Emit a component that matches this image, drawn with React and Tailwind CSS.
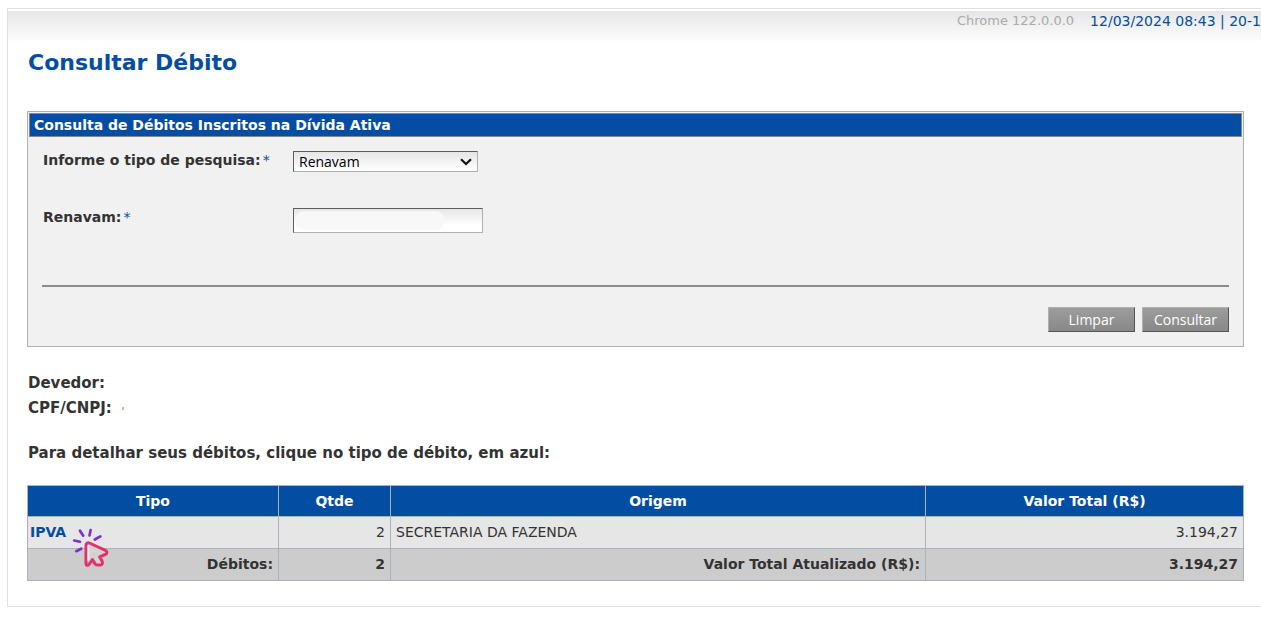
import { useState } from "react";

const debitos = [
    { tipo: "IPVA", qtde: 2, origem: "SECRETARIA DA FAZENDA", valor: "3.194,27" },
];

function ClickIcon() {
    return (
        <svg className="absolute left-11 top-2.5 z-10 w-[38px] h-[42px]" viewBox="0 0 38 42" fill="none" strokeLinecap="round" strokeLinejoin="round" aria-hidden="true">
            <path stroke="#7a33cc" strokeWidth="2.7" d="M2.2 13.5L8 14.8M8 3.7L11.2 8.7M18.6 3.1L17.5 8.5M28.4 9.3L22.8 12.5M4.3 24.2L9.2 21.7" />
            <path fill="#d5d2d4" stroke="#e3306f" strokeWidth="3" d="M14 18.2C14 16.3 15.8 15.3 17.4 16L33.4 23.4C35.6 24.5 35.3 27 33.2 27.5L27.6 29.8L30 34C31.2 36.2 30.3 37.7 28.4 37.9L25.2 38.1C24.1 38.1 23.4 37.6 22.9 36.6L20.4 32.6L17 37.5C15.8 39 14 38.4 14 36.5Z" />
            <path stroke="#f5f0f2" strokeWidth="1.8" d="M16.4 19V33" />
        </svg>
    );
}

export default function App() {
    const [tipo, setTipo] = useState("Renavam");
    const [renavam, setRenavam] = useState("");

    const limpar = () => {
        setTipo("Renavam");
        setRenavam("");
    };

    const button = "w-[87px] h-[25px] border border-t-[#b0b0b0] border-l-[#b0b0b0] border-r-[#555555] border-b-[#555555] bg-gradient-to-b from-[#9d9d9d] to-[#888888] font-['Open_Sans',sans-serif] text-sm leading-5 text-white";
    const field = "border border-t-[#5c5c5c] border-l-[#5c5c5c] border-r-[#b0b0b0] border-b-[#b0b0b0] font-['Open_Sans',sans-serif] text-sm text-black";

    return (
        <div className="bg-white pt-2 pl-[7px] font-['DejaVu_Sans',Verdana,sans-serif] text-sm text-[#333333]">
            <main className="border border-r-0 border-[#e0e0e0] pb-[25px]">
                <header className="mt-0.5 h-8 flex justify-end gap-4 overflow-hidden whitespace-nowrap bg-gradient-to-b from-[#e6e6e6] to-white">
                    <span className="text-[13px] leading-5 text-[#aaaaaa]">Chrome 122.0.0.0</span>
                    <span className="text-sm leading-5 text-[#034ea2]">12/03/2024 08:43 | 20-1</span>
                </header>
                <div className="pl-[19px] pr-[17px]">
                    <h1 className="pt-1 pl-px text-[22px] leading-8 font-bold text-[#034ea2]">Consultar Débito</h1>

                    <form className="mt-8 border border-[#b0b0b0] bg-[#f1f1f1]" onSubmit={(e) => e.preventDefault()}>
                        <h2 className="m-px pl-1 border border-[#888888] bg-[#034ea2] text-sm leading-[22px] font-bold text-white">
                            Consulta de Débitos Inscritos na Dívida Ativa
                        </h2>
                        <div className="mx-3.5 pt-[13px] pb-[52px] border-b-2 border-[#8b8d8a]">
                            <div className="flex items-start pl-px">
                                <label htmlFor="tipo" className="w-[250px] text-sm leading-[18px] font-bold whitespace-nowrap">
                                    Informe o tipo de pesquisa:<span className="ml-0.5 font-normal text-[#034ea2]">*</span>
                                </label>
                                <div className="relative">
                                    <select
                                        id="tipo"
                                        value={tipo}
                                        onChange={(e) => setTipo(e.target.value)}
                                        className={`${field} w-[185px] h-[21px] pl-[5px] appearance-none leading-[19px] bg-gradient-to-b from-[#e6e6e6] to-white`}
                                    >
                                        <option>Renavam</option>
                                        <option>CPF</option>
                                        <option>CNPJ</option>
                                    </select>
                                    <svg className="absolute right-1.5 top-[7px] w-3 h-2 pointer-events-none" viewBox="0 0 12 8" fill="none" stroke="#111111" strokeWidth="2.2">
                                        <path d="M1 1.2L6 6L11 1.2" />
                                    </svg>
                                </div>
                            </div>
                            <div className="flex items-start pl-px mt-9">
                                <label htmlFor="renavam" className="w-[250px] text-sm leading-[18px] font-bold whitespace-nowrap">
                                    Renavam:<span className="ml-0.5 font-normal text-[#034ea2]">*</span>
                                </label>
                                <div className="relative">
                                    <input
                                        id="renavam"
                                        type="text"
                                        value={renavam}
                                        onChange={(e) => setRenavam(e.target.value)}
                                        className={`${field} block w-[190px] h-[25px] px-1 bg-gradient-to-b from-[#e6e6e6] to-white to-70%`}
                                    />
                                    <span className="absolute left-0.5 top-[3px] w-[150px] h-[19px] rounded-full bg-[#f8f8f8] pointer-events-none" />
                                </div>
                            </div>
                        </div>
                        <div className="flex justify-end gap-[7px] px-3.5 pt-5 pb-3.5">
                            <button type="button" onClick={limpar} className={button}>Limpar</button>
                            <button type="submit" className={button}>Consultar</button>
                        </div>
                    </form>

                    <div className="mt-6 pl-px text-[15px] leading-[25px] font-bold">
                        <p>Devedor:</p>
                        <p className="flex items-center gap-2.5">
                            CPF/CNPJ:
                            <span className="w-0.5 h-[3px] bg-[#d9b98c]" />
                        </p>
                        <p className="mt-5">Para detalhar seus débitos, clique no tipo de débito, em azul:</p>
                    </div>

                    <table className="mt-[19px] w-full table-fixed border-collapse text-sm leading-[19px] [&_td]:border [&_td]:border-[#a9b3bd] [&_td]:px-[5px] [&_td]:py-1.5 [&_th]:border [&_th]:border-[#a9b3bd] [&_th]:py-1.5 [&_th]:leading-[18px]">
                        <colgroup>
                            <col className="w-[251px]" />
                            <col className="w-[112px]" />
                            <col />
                            <col className="w-[318px]" />
                        </colgroup>
                        <thead>
                            <tr className="bg-[#034ea2] text-white">
                                <th>Tipo</th>
                                <th>Qtde</th>
                                <th>Origem</th>
                                <th>Valor Total (R$)</th>
                            </tr>
                        </thead>
                        <tbody>
                            {debitos.map((d) => (
                                <tr key={d.tipo} className="bg-[#e6e6e6]">
                                    <td className="relative pl-0.5!">
                                        <a href="#detalhe" className="font-bold text-[#034ea2]">{d.tipo}</a>
                                        <ClickIcon />
                                    </td>
                                    <td className="text-right">{d.qtde}</td>
                                    <td>{d.origem}</td>
                                    <td className="text-right">{d.valor}</td>
                                </tr>
                            ))}
                        </tbody>
                        <tfoot>
                            <tr className="bg-[#cccccc] text-right font-bold">
                                <td>Débitos:</td>
                                <td>2</td>
                                <td>Valor Total Atualizado (R$):</td>
                                <td>3.194,27</td>
                            </tr>
                        </tfoot>
                    </table>
                </div>
            </main>
        </div>
    );
}
